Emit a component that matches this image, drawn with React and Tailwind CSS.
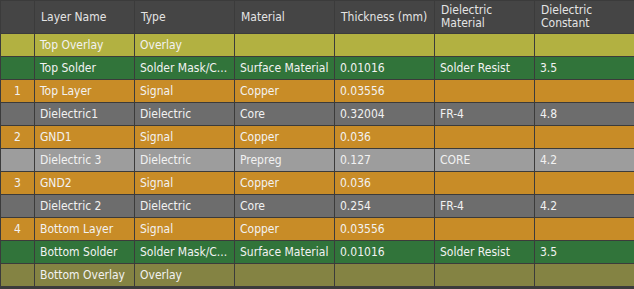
import React from 'react';

const rows = [
  { no: '', name: 'Top Overlay', type: 'Overlay', material: '', thickness: '', dielMat: '', dk: '', bg: 'bg-[#b2b141]' },
  { no: '', name: 'Top Solder', type: 'Solder Mask/C...', material: 'Surface Material', thickness: '0.01016', dielMat: 'Solder Resist', dk: '3.5', bg: 'bg-[#31743a]' },
  { no: '1', name: 'Top Layer', type: 'Signal', material: 'Copper', thickness: '0.03556', dielMat: '', dk: '', bg: 'bg-[#c88c27]' },
  { no: '', name: 'Dielectric1', type: 'Dielectric', material: 'Core', thickness: '0.32004', dielMat: 'FR-4', dk: '4.8', bg: 'bg-[#6d6d6d]' },
  { no: '2', name: 'GND1', type: 'Signal', material: 'Copper', thickness: '0.036', dielMat: '', dk: '', bg: 'bg-[#c88c27]' },
  { no: '', name: 'Dielectric 3', type: 'Dielectric', material: 'Prepreg', thickness: '0.127', dielMat: 'CORE', dk: '4.2', bg: 'bg-[#9d9d9d]' },
  { no: '3', name: 'GND2', type: 'Signal', material: 'Copper', thickness: '0.036', dielMat: '', dk: '', bg: 'bg-[#c88c27]' },
  { no: '', name: 'Dielectric 2', type: 'Dielectric', material: 'Core', thickness: '0.254', dielMat: 'FR-4', dk: '4.2', bg: 'bg-[#6d6d6d]' },
  { no: '4', name: 'Bottom Layer', type: 'Signal', material: 'Copper', thickness: '0.03556', dielMat: '', dk: '', bg: 'bg-[#c88c27]' },
  { no: '', name: 'Bottom Solder', type: 'Solder Mask/C...', material: 'Surface Material', thickness: '0.01016', dielMat: 'Solder Resist', dk: '3.5', bg: 'bg-[#31743a]' },
  { no: '', name: 'Bottom Overlay', type: 'Overlay', material: '', thickness: '', dielMat: '', dk: '', bg: 'bg-[#848343]' },
];

const headers = ['Layer Name', 'Type', 'Material', 'Thickness (mm)', ['Dielectric', 'Material'], ['Dielectric', 'Constant']];

function HeaderCell({ label }) {
  return (
    <div className="bg-[#454545] flex items-center pl-[6px] text-[#e4e4e4] leading-[13px]">
      {Array.isArray(label) ? (
        <div className="flex flex-col">
          <span>{label[0]}</span>
          <span>{label[1]}</span>
        </div>
      ) : (
        <span>{label}</span>
      )}
    </div>
  );
}

function Cell({ bg, children, center }) {
  return (
    <div className={`${bg} flex items-center whitespace-nowrap overflow-hidden ${center ? 'justify-center' : 'pl-[5px]'}`}>
      {children}
    </div>
  );
}

export default function App() {
  return (
    <div
      className="w-[634px] h-[289px] bg-[#3b3b3b] pt-px pl-px overflow-hidden text-[12px] text-[#f2f2f2]"
      style={{ fontFamily: '"DejaVu Sans Condensed", "DejaVu Sans", sans-serif' }}
    >
      <div className="grid grid-cols-[33px_99px_99px_99px_99px_99px_1fr] grid-rows-[32px] auto-rows-[22px] gap-px">
        <div className="bg-[#454545]" />
        {headers.map((h, i) => (
          <HeaderCell key={i} label={h} />
        ))}
        {rows.map((r, i) => (
          <React.Fragment key={i}>
            <Cell bg={r.bg} center>{r.no}</Cell>
            <Cell bg={r.bg}>{r.name}</Cell>
            <Cell bg={r.bg}>{r.type}</Cell>
            <Cell bg={r.bg}>{r.material}</Cell>
            <Cell bg={r.bg}>{r.thickness}</Cell>
            <Cell bg={r.bg}>{r.dielMat}</Cell>
            <Cell bg={r.bg}>{r.dk}</Cell>
          </React.Fragment>
        ))}
      </div>
    </div>
  );
}
